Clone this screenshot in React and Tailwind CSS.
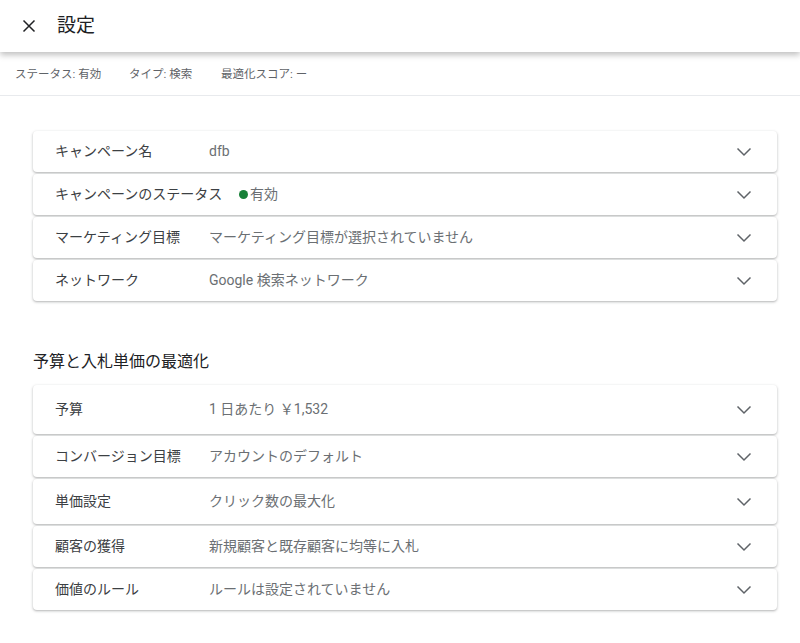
import React from "react";

const font = { fontFamily: 'Roboto, "Noto Sans CJK JP", sans-serif' };

function Chevron() {
  return (
    <svg width="16" height="10" viewBox="0 0 16 10" className="shrink-0">
      <path d="M1.5 1.5 L8 8 L14.5 1.5" fill="none" stroke="#5f6368" strokeWidth="1.5" />
    </svg>
  );
}

function Row({ label, value, h = "h-[41px]" }) {
  return (
    <div
      className={`flex items-center ${h} bg-white rounded-[4px] shadow-[0_1px_2px_rgba(60,64,67,0.3),0_1px_3px_1px_rgba(60,64,67,0.08)] pl-[22px] pr-[25px]`}
    >
      <div className="w-[154px] shrink-0 text-[14px] text-[#3c4043] whitespace-nowrap">{label}</div>
      <div className="flex-1 text-[14px] text-[#6b6f73] whitespace-nowrap flex items-center">{value}</div>
      <Chevron />
    </div>
  );
}

export default function App() {
  return (
    <div className="w-[800px] h-[643px] bg-white overflow-hidden" style={font}>
      <div className="relative z-10 h-[52px] bg-white flex items-center shadow-[0_3px_6px_rgba(0,0,0,0.25)]">
        <svg width="14" height="14" viewBox="0 0 14 14" className="ml-[22px]">
          <path d="M1.5 1.5 L12.5 12.5 M12.5 1.5 L1.5 12.5" stroke="#202124" strokeWidth="1.5" />
        </svg>
        <div className="ml-[21px] text-[19px] text-[#202124]">設定</div>
      </div>
      <div className="h-[44px] flex items-center border-b border-[#e8eaed] pl-[15px] text-[11.5px] text-[#5f6368] pt-[2px]">
        <span className="w-[114px]">ステータス: 有効</span>
        <span className="w-[92px]">タイプ: 検索</span>
        <span>最適化スコア: ー</span>
      </div>
      <div className="ml-[33px] mr-[23px] pt-[35px]">
        <div className="flex flex-col gap-[2px]">
          <Row label="キャンペーン名" value="dfb" />
          <Row
            label="キャンペーンのステータス"
            value={
              <span className="flex items-center ml-[30px]">
                <span className="inline-block w-[9px] h-[9px] rounded-full bg-[#188038] mr-[2px]" />
                有効
              </span>
            }
          />
          <Row label="マーケティング目標" value="マーケティング目標が選択されていません" />
          <Row label="ネットワーク" value="Google 検索ネットワーク" />
        </div>
        <div className="mt-[51px] text-[16px] text-[#202124] leading-[20px]">予算と入札単価の最適化</div>
        <div className="mt-[13px] flex flex-col gap-[2px]">
          <Row label="予算" value="1 日あたり ￥1,532" h="h-[49px]" />
          <Row label="コンバージョン目標" value="アカウントのデフォルト" />
          <Row label="単価設定" value="クリック数の最大化" h="h-[45px]" />
          <Row label="顧客の獲得" value="新規顧客と既存顧客に均等に入札" />
          <Row label="価値のルール" value="ルールは設定されていません" />
        </div>
      </div>
    </div>
  );
}
